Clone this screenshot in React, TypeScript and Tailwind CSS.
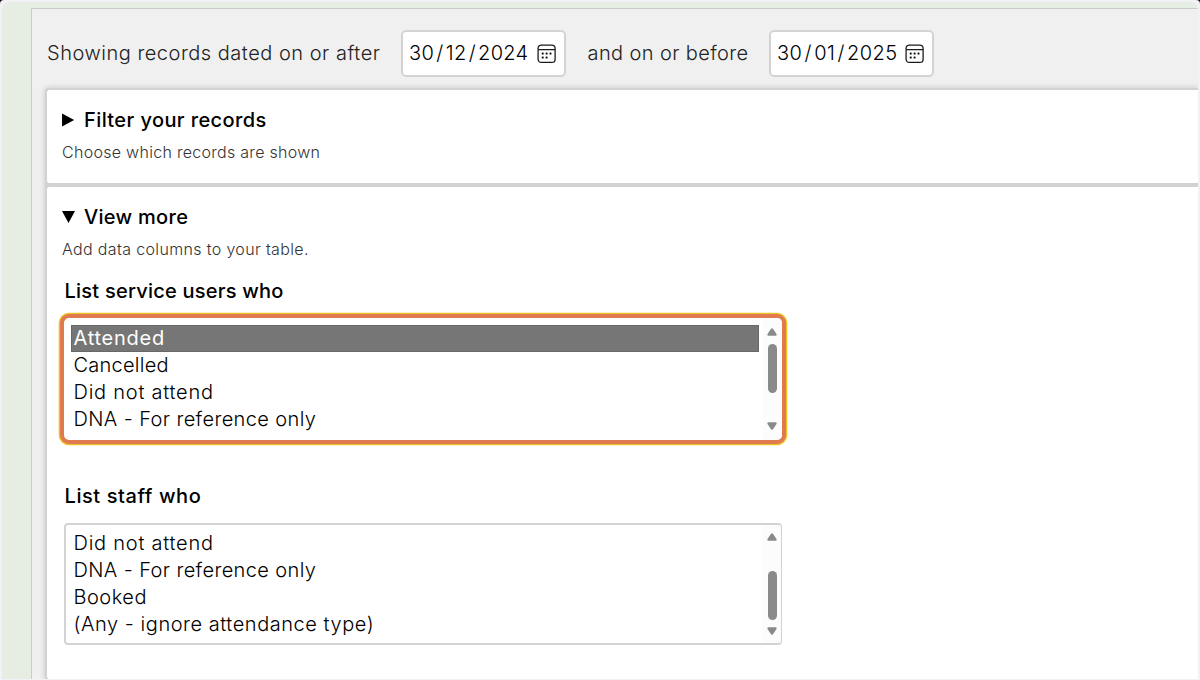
import type { ReactNode } from 'react';

function CalendarIcon() {
  return (
    <svg width="20" height="20" viewBox="0 0 20 20" className="shrink-0" fill="none">
      <rect x="1.1" y="1.1" width="17" height="17.3" rx="3.2" stroke="#1c1c1c" strokeWidth="1.3" />
      <path d="M1.2 5.7H18" stroke="#1c1c1c" strokeWidth="1.2" />
      <g fill="#111">
        <rect x="4.7" y="8.6" width="2" height="2" rx=".6" />
        <rect x="8.6" y="8.6" width="2" height="2" rx=".6" />
        <rect x="12.5" y="8.6" width="2" height="2" rx=".6" />
        <rect x="4.7" y="12.6" width="2" height="2" rx=".6" />
        <rect x="8.6" y="12.6" width="2" height="2" rx=".6" />
      </g>
    </svg>
  );
}

function DateInput({ parts, spacing }: { parts: [string, string, string]; spacing: string }) {
  return (
    <div
      className={`flex h-[47px] w-[165px] items-center justify-between rounded-[5px] border-2 border-[#d3d3d3] bg-white pr-[7px] pl-[6px] text-[20px] leading-none font-[360] text-black ${spacing}`}
    >
      <span className="pb-[2px] whitespace-nowrap">
        {parts[0]}
        <span className="mx-[2.2px]">/</span>
        {parts[1]}
        <span className="mx-[2.2px]">/</span>
        {parts[2]}
      </span>
      <CalendarIcon />
    </div>
  );
}

function Arrow({ down = false }: { down?: boolean }) {
  return (
    <svg width="10" height="8" viewBox="0 0 10 8" className={down ? 'rotate-180' : ''}>
      <path d="M4 .8Q5 -.4 6 .8L9.5 6Q10 7.6 8.7 7.7H1.3Q0 7.6 .5 6Z" fill="#8a8a8a" />
    </svg>
  );
}

type Option = { label: string; spacing: string; selected?: boolean };

function OptionRow({ label, spacing, selected }: Option) {
  return (
    <div
      className={`h-[27px] pl-[2.5px] text-[20px] leading-[26px] whitespace-nowrap ${spacing} ${
        selected ? 'bg-[#767676] font-[420] text-white outline-1 -outline-offset-1 outline-[#686868]' : 'font-[340] text-black'
      }`}
    >
      {label}
    </div>
  );
}

function ScrollBar({ thumb }: { thumb: string }) {
  return (
    <div className="flex w-[18px] flex-col items-center justify-between bg-[#fcfcfc]">
      <Arrow />
      <div className={`w-[9px] flex-none rounded-full bg-[#8a8a8a] ${thumb}`} />
      <Arrow down />
    </div>
  );
}

const SERVICE_USERS: Option[] = [
  { label: 'Attended', spacing: 'tracking-[0.75px]', selected: true },
  { label: 'Cancelled', spacing: 'tracking-[0.25px]' },
  { label: 'Did not attend', spacing: 'tracking-[0.76px]' },
  { label: 'DNA - For reference only', spacing: 'tracking-[0.39px]' },
];

const STAFF: Option[] = [
  { label: 'Did not attend', spacing: 'tracking-[0.76px]' },
  { label: 'DNA - For reference only', spacing: 'tracking-[0.39px]' },
  { label: 'Booked', spacing: 'tracking-[0.5px]' },
  { label: '(Any - ignore attendance type)', spacing: 'tracking-[0.54px]' },
];

function Card({ className, children }: { className: string; children: ReactNode }) {
  return (
    <section className={`rounded-l-[4px] border-2 border-r-0 border-[#d2d2d2] bg-white pl-[15px] ${className}`}>
      {children}
    </section>
  );
}

export default function App() {
  return (
    <div className="h-[680px] w-[1200px] overflow-hidden bg-black font-['Inter','Noto_Sans',sans-serif]">
      <div className="h-full rounded-t-[4px] bg-[#f2f1f6] px-[2px] pt-[2px] pb-[1px]">
        <div className="h-full overflow-hidden rounded-t-[8px] bg-[#e6ede2] pt-[6px] pl-[29px]">
          <main className="flex h-full flex-col border-t border-l border-[#c9cdc9] bg-[#f0f0f0] pt-[21px] pl-[13px]">
            <div className="flex items-center pl-[2px] text-[20px] leading-none font-light whitespace-nowrap text-[#222]">
              <span className="w-[354px] pb-[2px] tracking-[0.51px]">Showing records dated on or after</span>
              <DateInput parts={['30', '12', '2024']} spacing="tracking-[0.3px]" />
              <span className="ml-[21px] w-[182px] pl-[0.5px] pb-[2px] tracking-[0.4px]">and on or before</span>
              <DateInput parts={['30', '01', '2025']} spacing="tracking-[0.45px]" />
            </div>

            <div className="mt-[11px] flex flex-1 flex-col rounded-tl-[4px] bg-[#d2d2d2] shadow-[0_0_5px_1px_rgba(0,0,0,0.13)]">
              <Card className="h-[97px] pt-[16px]">
                <h2 className="flex items-center text-[20px] leading-[28px] font-medium tracking-[0.4px] text-black">
                  <svg width="13" height="14" viewBox="0 0 13 14" className="mr-[9px]">
                    <path d="M0 0.5L12.2 7L0 13.5Z" fill="#000" />
                  </svg>
                  Filter your records
                </h2>
                <p className="mt-[6px] text-[16px] leading-[24px] font-light tracking-[0.29px] text-[#333]">
                  Choose which records are shown
                </p>
              </Card>

              <Card className="flex-1 border-b-0 pt-[16px]">
                <h2 className="flex items-center text-[20px] leading-[28px] font-medium tracking-[0.3px] text-black">
                  <svg width="13" height="12" viewBox="0 0 13 12" className="mr-[9px]">
                    <path d="M0 0H13L6.5 12Z" fill="#000" />
                  </svg>
                  View more
                </h2>
                <p className="mt-[6px] text-[16px] leading-[24px] font-light tracking-[0.35px] text-[#333]">
                  Add data columns to your table.
                </p>

                <h3 className="mt-[16px] pl-[2.5px] text-[20px] leading-[28px] font-medium tracking-[0.23px] text-black">
                  List service users who
                </h3>
                <div className="mt-[9px] -ml-[2px] h-[130px] w-[726px] rounded-[9px] border-4 border-[#e07b50] bg-white shadow-[0_0_0_1.3px_#eec427]">
                  <div className="flex h-full justify-between">
                    <div className="ml-[7px] w-[688px] pt-[7px]">
                      {SERVICE_USERS.map((option) => (
                        <OptionRow key={option.label} {...option} />
                      ))}
                    </div>
                    <div className="flex overflow-hidden rounded-r-[5px] bg-[#fcfcfc] pt-[9.5px] pr-[1px] pb-[10px]">
                      <ScrollBar thumb="h-[49px] -mt-[21px]" />
                    </div>
                  </div>
                </div>

                <h3 className="mt-[38px] pl-[2.5px] text-[20px] leading-[28px] font-medium tracking-[0.58px] text-black">
                  List staff who
                </h3>
                <div className="mt-[13px] ml-[2px] h-[122px] w-[718px] rounded-[4px] border-2 border-[#d3d3d3] bg-white">
                  <div className="flex h-full justify-between">
                    <div className="ml-[5px] w-[688px] pt-[5px]">
                      {STAFF.map((option) => (
                        <OptionRow key={option.label} {...option} />
                      ))}
                    </div>
                    <div className="-mr-[1px] flex overflow-hidden rounded-r-[2px] bg-[#fcfcfc] pt-[8px] pb-[8px] pl-[1px]">
                      <ScrollBar thumb="h-[49px] mt-[22px]" />
                    </div>
                  </div>
                </div>
              </Card>
            </div>
          </main>
        </div>
      </div>
    </div>
  );
}
